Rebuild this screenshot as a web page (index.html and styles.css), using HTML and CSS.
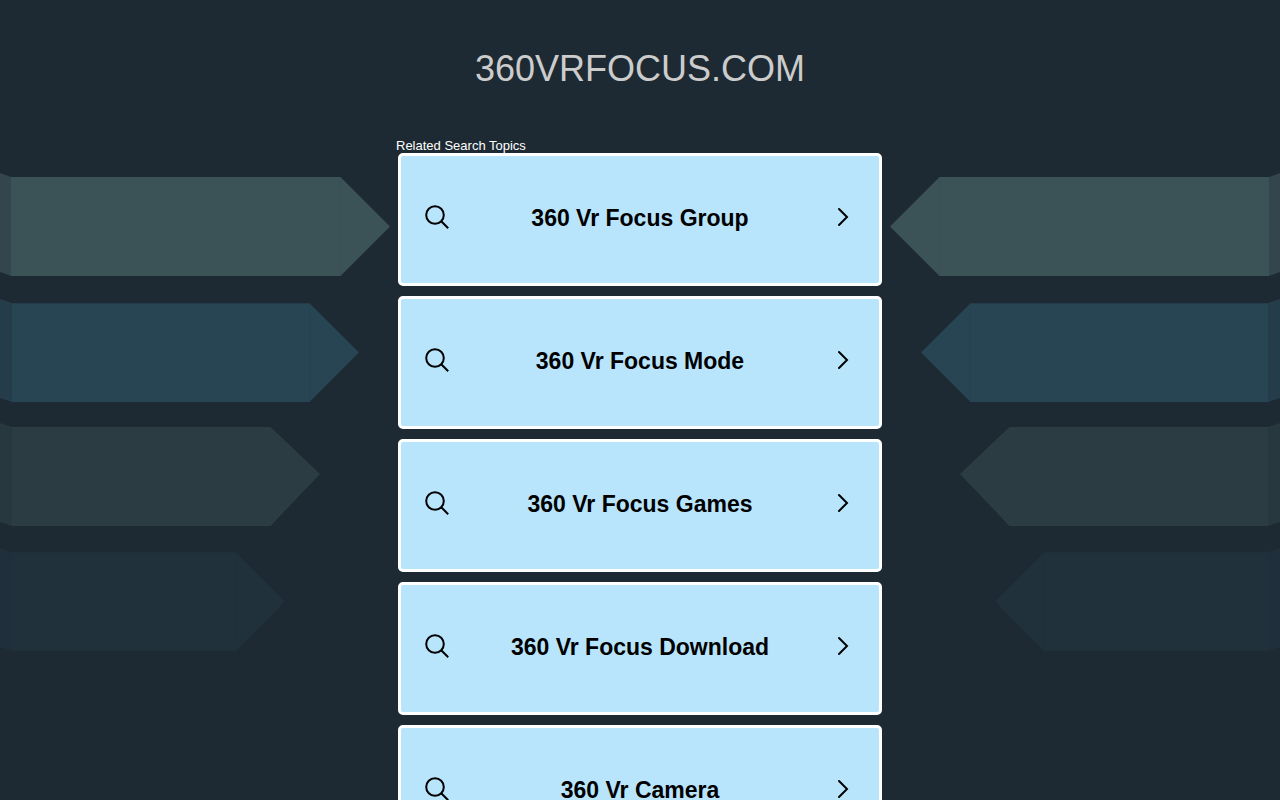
FILE: index.html
```html
<!DOCTYPE html>
<html lang="en">
<head>
    <meta charset="UTF-8">
    <meta name="viewport" content="width=device-width, initial-scale=1.0">
    <title>360vrfocus.com</title>
    <link rel="stylesheet" href="styles.css">
</head>
<body>

    <svg width="0" height="0" class="sprite" aria-hidden="true">
        <symbol id="ribbons" viewBox="0 0 390 500">
            <!-- folded ends -->
            <path fill="#33464d" d="M0 13 11 17V116L0 112z"/>
            <path fill="#253d4a" d="M0 139 12 143V242L0 238z"/>
            <path fill="#27383f" d="M0 263 12 267V366L0 362z"/>
            <path fill="#1f2f3b" d="M0 388 12 392V491L0 487z"/>
            <!-- arrows -->
            <path fill="#3b5357" d="M11 17H340.500L390 66.500 340.500 116H11z"/>
            <path fill="#284553" d="M12 143.300H309.500L359 192.500 309.500 242H12z"/>
            <path fill="#2b3d43" d="M12 267H270.500L320 314 270.500 366H12z"/>
            <path fill="#20313c" d="M12 392.300H236L285 441.500 236 491H12z"/>
            <path fill="none" stroke="#385054" stroke-width="1" d="M340.500 18V115"/>
            <path fill="none" stroke="#264250" stroke-width="1" d="M309.500 144V241"/>
            <path fill="none" stroke="#1f2f3a" stroke-width="1" d="M235.500 393V490"/>
        </symbol>
        <symbol id="search" viewBox="0 0 24 24">
            <circle cx="10" cy="10" r="8.800"/>
            <path d="M16 16 23.200 23.200"/>
        </symbol>
        <symbol id="chevron" viewBox="0 0 12 20">
            <path d="M2 2 10 10 2 18"/>
        </symbol>
    </svg>

    <div class="backdrop" aria-hidden="true">
        <svg class="ribbons"><use href="#ribbons"/></svg>
        <svg class="ribbons ribbons-right"><use href="#ribbons"/></svg>
    </div>

    <div class="container">
        <h1 class="domain">360VRFOCUS.COM</h1>

        <h2 class="label">Related Search Topics</h2>

        <nav class="topics">
            <a class="topic" href="#">
                <svg class="icon-search"><use href="#search"/></svg>
                <span class="topic-text">360 Vr Focus Group</span>
                <svg class="icon-chevron"><use href="#chevron"/></svg>
            </a>
            <a class="topic" href="#">
                <svg class="icon-search"><use href="#search"/></svg>
                <span class="topic-text">360 Vr Focus Mode</span>
                <svg class="icon-chevron"><use href="#chevron"/></svg>
            </a>
            <a class="topic" href="#">
                <svg class="icon-search"><use href="#search"/></svg>
                <span class="topic-text">360 Vr Focus Games</span>
                <svg class="icon-chevron"><use href="#chevron"/></svg>
            </a>
            <a class="topic" href="#">
                <svg class="icon-search"><use href="#search"/></svg>
                <span class="topic-text">360 Vr Focus Download</span>
                <svg class="icon-chevron"><use href="#chevron"/></svg>
            </a>
            <a class="topic" href="#">
                <svg class="icon-search"><use href="#search"/></svg>
                <span class="topic-text">360 Vr Camera</span>
                <svg class="icon-chevron"><use href="#chevron"/></svg>
            </a>
        </nav>
    </div>

</body>
</html>
```

FILE: styles.css
```css
* {
    box-sizing: border-box;
}

body {
    margin: 0;
    background-color: #1e2a33;
    font-family: Arial, "Liberation Sans", sans-serif;
    color: #fff;
}

.sprite {
    position: absolute;
}

/* decorative ribbons behind the list */
.backdrop {
    position: absolute;
    top: 160px;
    left: 0;
    right: 0;
    z-index: -1;
    display: flex;
    justify-content: space-between;
    overflow: hidden;
}

.ribbons {
    flex: none;
    width: 390px;
    height: 500px;
}

.ribbons-right {
    transform: scaleX(-1);
}

.container {
    max-width: 488px;
    margin: 0 auto;
    padding-top: 48px;
}

.domain {
    margin: 0 0 49px;
    font-size: 36px;
    font-weight: normal;
    line-height: 41px;
    text-align: center;
    color: #ccc;
}

.label {
    margin: 0;
    font-size: 13px;
    font-weight: normal;
    line-height: 15px;
}

.topics {
    display: flex;
    flex-direction: column;
    gap: 10px;
    padding: 0 2px;
}

.topic {
    display: flex;
    align-items: center;
    min-height: 133px;
    padding: 0 30px 3px 24px;
    border: 3px solid #fff;
    border-radius: 5px;
    background-color: #b8e5fc;
    color: #000;
    text-decoration: none;
}

.topic:hover {
    background-color: #d3f0ff;
}

.topic-text {
    flex: 1;
    font-size: 23px;
    font-weight: bold;
    line-height: 28px;
    text-align: center;
}

.icon-search,
.icon-chevron {
    flex: none;
    margin-bottom: 2px;
    fill: none;
    stroke: #000;
    stroke-width: 2;
}

.icon-search {
    width: 24px;
    height: 24px;
}

.icon-chevron {
    width: 12px;
    height: 20px;
    margin-left: 6px;
    stroke-linecap: round;
}
```
